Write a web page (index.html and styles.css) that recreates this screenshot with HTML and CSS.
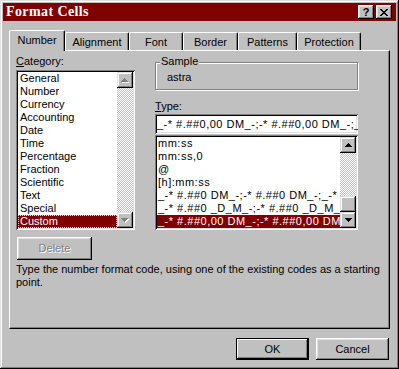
FILE: index.html
```html
<!DOCTYPE html>
<html lang="en">
<head>
    <meta charset="UTF-8">
    <meta name="viewport" content="width=device-width, initial-scale=1.0">
    <title>Format Cells</title>
    <link rel="stylesheet" href="styles.css">
</head>
<body>
    <div class="window">
        <div class="titlebar">
            <span class="title">Format Cells</span>
            <button class="cap-btn">?</button>
            <button class="cap-btn close">
                <svg width="8" height="7" viewBox="0 0 8 7"><path d="M0 0h2v1H0zM6 0h2v1H6zM1 1h2v1H1zM5 1h2v1H5zM2 2h4v1H2zM3 3h2v1H3zM2 4h4v1H2zM1 5h2v1H1zM5 5h2v1H5zM0 6h2v1H0zM6 6h2v1H6z"/></svg>
            </button>
        </div>

        <div class="dialog">
            <div class="tabs">
                <div class="tab active w-number">Number</div>
                <div class="tab w-alignment">Alignment</div>
                <div class="tab w-font">Font</div>
                <div class="tab w-border">Border</div>
                <div class="tab w-patterns">Patterns</div>
                <div class="tab w-protection">Protection</div>
            </div>

            <div class="panel">
                <div class="columns">
                    <div class="col-left">
                        <div class="label"><u>C</u>ategory:</div>
                        <div class="listbox sunken category">
                            <ul class="items">
                                <li>General</li>
                                <li>Number</li>
                                <li>Currency</li>
                                <li>Accounting</li>
                                <li>Date</li>
                                <li>Time</li>
                                <li>Percentage</li>
                                <li>Fraction</li>
                                <li>Scientific</li>
                                <li>Text</li>
                                <li>Special</li>
                                <li class="selected focus">Custom</li>
                            </ul>
                            <div class="scrollbar">
                                <span class="sb-btn">
                                    <svg width="8" height="5" viewBox="0 0 8 5"><path fill="#fff" transform="translate(1 1)" d="M3 0h1v1H3zM2 1h3v1H2zM1 2h5v1H1zM0 3h7v1H0z"/><path fill="#808080" d="M3 0h1v1H3zM2 1h3v1H2zM1 2h5v1H1zM0 3h7v1H0z"/></svg>
                                </span>
                                <span class="sb-track"></span>
                                <span class="sb-btn">
                                    <svg width="8" height="5" viewBox="0 0 8 5"><path fill="#fff" transform="translate(1 1)" d="M0 0h7v1H0zM1 1h5v1H1zM2 2h3v1H2zM3 3h1v1H3z"/><path fill="#808080" d="M0 0h7v1H0zM1 1h5v1H1zM2 2h3v1H2zM3 3h1v1H3z"/></svg>
                                </span>
                            </div>
                        </div>
                        <button class="btn delete" disabled>Delete</button>
                    </div>

                    <div class="col-right">
                        <div class="group">
                            <div class="group-title">Sample</div>
                            <div class="sample">astra</div>
                        </div>
                        <div class="label type-label"><u>T</u>ype:</div>
                        <div class="textbox sunken">_-* #.##0,00 DM_-;-* #.##0,00 DM_-;_-* "-"?? DM_-;_-@_-</div>
                        <div class="listbox sunken types">
                            <ul class="items">
                                <li>mm:ss</li>
                                <li>mm:ss,0</li>
                                <li>@</li>
                                <li>[h]:mm:ss</li>
                                <li>_-* #.##0 DM_-;-* #.##0 DM_-;_-* "-" DM_-;_-@_-</li>
                                <li>_-* #.##0 _D_M_-;-* #.##0 _D_M_-;_-* "-" _D_M_-;_-@_-</li>
                                <li class="selected">_-* #.##0,00 DM_-;-* #.##0,00 DM_-;_-* "-"?? DM_-;_-@_-</li>
                            </ul>
                            <div class="scrollbar">
                                <span class="sb-btn">
                                    <svg width="7" height="4" viewBox="0 0 7 4"><path d="M3 0h1v1H3zM2 1h3v1H2zM1 2h5v1H1zM0 3h7v1H0z"/></svg>
                                </span>
                                <span class="sb-track"></span>
                                <span class="sb-btn thumb"></span>
                                <span class="sb-btn">
                                    <svg width="7" height="4" viewBox="0 0 7 4"><path d="M0 0h7v1H0zM1 1h5v1H1zM2 2h3v1H2zM3 3h1v1H3z"/></svg>
                                </span>
                            </div>
                        </div>
                    </div>
                </div>

                <p class="hint">Type the number format code, using one of the existing codes as a starting point.</p>
            </div>

            <div class="actions">
                <button class="btn default">OK</button>
                <button class="btn">Cancel</button>
            </div>
        </div>
    </div>
</body>
</html>
```

FILE: styles.css
```css
* {
    margin: 0;
    padding: 0;
    box-sizing: border-box;
}

body {
    background: #c0c0c0;
    font-family: "Liberation Sans", Arial, sans-serif;
    font-size: 11px;
    line-height: 13px;
    color: #000;
}

.window {
    width: 399px;
    height: 369px;
    padding: 3px;
    background: #c0c0c0;
    box-shadow: inset -1px -1px #000, inset 1px 1px #dfdfdf, inset -2px -2px #808080, inset 2px 2px #fff;
}

/* title bar */
.titlebar {
    display: flex;
    align-items: center;
    height: 18px;
    padding: 0 4px 0 3px;
    background: #800000;
}

.title {
    flex: 1;
    color: #fff;
    font-family: "Liberation Serif", "Times New Roman", serif;
    font-weight: bold;
    font-size: 14px;
    line-height: 18px;
    letter-spacing: 0.4px;
}

.cap-btn {
    display: flex;
    align-items: center;
    justify-content: center;
    width: 16px;
    height: 14px;
    border: none;
    background: #c0c0c0;
    color: #000;
    font: bold 11px/14px "Liberation Sans", Arial, sans-serif;
    box-shadow: inset -1px -1px #000, inset 1px 1px #fff, inset -2px -2px #808080, inset 2px 2px #dfdfdf;
}

.cap-btn.close {
    margin-left: 2px;
}

/* dialog body */
.dialog {
    padding: 0 6px;
}

.tabs {
    position: relative;
    z-index: 1;
    display: flex;
    align-items: flex-end;
    height: 20px;
    margin-top: 9px;
}

.tab {
    height: 18px;
    padding-top: 3px;
    text-align: center;
    background: #c0c0c0;
    border-top: 1px solid #fff;
    border-left: 1px solid #fff;
    border-right: 1px solid #000;
    border-radius: 2px 2px 0 0;
    box-shadow: inset -1px 0 #808080;
}

.tab.active {
    height: 21px;
    margin-bottom: -1px;
    padding-top: 3px;
}

.w-number { width: 56px; }
.w-alignment { width: 64px; }
.w-font { width: 54px; }
.w-border { width: 55px; }
.w-patterns { width: 59px; }
.w-protection { width: 64px; }

.panel {
    height: 279px;
    padding: 4px 2px 0 6px;
    border: 1px solid;
    border-color: #fff #000 #000 #fff;
    box-shadow: inset -1px -1px #808080;
}

.columns {
    display: grid;
    grid-template-columns: 119px 203px;
    column-gap: 20px;
}

.col-left,
.col-right {
    display: flex;
    flex-direction: column;
    align-items: flex-start;
}

.col-right {
    align-items: stretch;
}

.sunken {
    background: #fff;
    padding: 2px;
    box-shadow: inset 1px 1px #808080, inset -1px -1px #fff, inset 2px 2px #000, inset -2px -2px #dfdfdf;
}

/* list boxes */
.listbox {
    display: flex;
}

.category {
    width: 119px;
    height: 160px;
    margin-top: 2px;
}

.types {
    height: 95px;
    margin-top: 1px;
}

.items {
    flex: 1;
    min-width: 0;
    list-style: none;
    overflow: hidden;
}

.items li {
    height: 13px;
    padding-left: 2px;
    white-space: nowrap;
    overflow: hidden;
}

.types .items li {
    padding-left: 1px;
    letter-spacing: 0.5px;
}

.items li.selected {
    background: #800000;
    color: #fff;
}

.items li.focus {
    outline: 1px dotted #7fffff;
    outline-offset: -1px;
}

.scrollbar {
    display: flex;
    flex-direction: column;
    width: 16px;
}

.sb-btn {
    display: flex;
    align-items: center;
    justify-content: center;
    height: 16px;
    background: #c0c0c0;
    box-shadow: inset -1px -1px #000, inset 1px 1px #dfdfdf, inset -2px -2px #808080, inset 2px 2px #fff;
}

.sb-track {
    flex: 1;
    background: repeating-conic-gradient(#fff 0 25%, #c0c0c0 0 50%) 0 0 / 2px 2px;
}

/* sample group */
.group {
    margin-top: 7px;
    padding: 0 4px 5px;
    border: 1px solid #808080;
    box-shadow: inset 1px 1px #fff, 1px 1px #fff;
}

.group-title {
    display: table;
    margin-top: -8px;
    padding: 0 1px;
    background: #c0c0c0;
}

.sample {
    margin-top: 3px;
    padding-left: 7px;
}

.type-label {
    margin-top: 10px;
}

.textbox {
    height: 20px;
    margin-top: 1px;
    padding: 2px 0 2px 2px;
    line-height: 16px;
    letter-spacing: 0.5px;
    white-space: nowrap;
    overflow: hidden;
}

/* buttons */
.btn {
    width: 73px;
    height: 22px;
    border: none;
    background: #c0c0c0;
    color: #000;
    font: 11px/13px "Liberation Sans", Arial, sans-serif;
    box-shadow: inset -1px -1px #000, inset 1px 1px #fff, inset -2px -2px #808080, inset 2px 2px #dfdfdf;
}

.btn.default {
    box-shadow: inset 0 0 0 1px #000, inset -2px -2px #000, inset 2px 2px #fff, inset -3px -3px #808080;
}

.btn.delete {
    width: 75px;
    height: 23px;
    margin-top: 7px;
    margin-left: 1px;
    color: #808080;
    text-shadow: 1px 1px #fff;
}

.hint {
    margin-top: 3px;
}

.actions {
    display: flex;
    justify-content: flex-end;
    gap: 7px;
    margin-top: 9px;
    padding-right: 1px;
}
```
